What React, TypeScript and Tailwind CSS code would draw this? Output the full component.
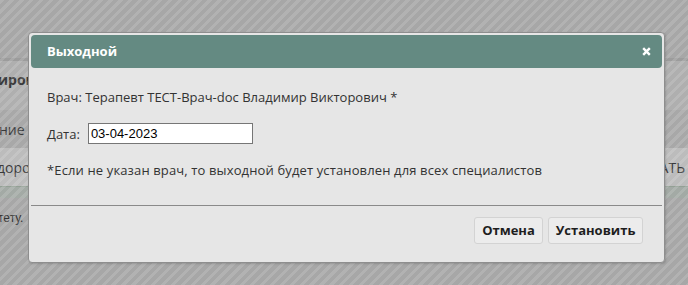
import React from "react";

export default function App() {
  return (
    <div className="relative w-[688px] h-[285px] overflow-hidden bg-[#a7a7a7] font-['Open_Sans',sans-serif]">
      {/* underlying page */}
      <div className="flex flex-col w-full">
        <div className="h-[58px]" />
        <div className="h-[52px] border-t-[3px] border-[#9c9c9c] bg-[#afafaf] flex items-center">
          <span className="ml-[-2px] text-[14px] font-bold text-[#3a3a3a] -mt-[12px]">ирование</span>
        </div>
        <div className="h-[38px] bg-[#a8a8a8] flex items-center">
          <span className="ml-[-1px] text-[14px] text-[#3a3a3a]">ние</span>
        </div>
        <div className="h-[38px] bg-[#bcbcbc] flex items-center justify-between">
          <span className="ml-[-3px] text-[14px] text-[#3a3a3a]">доровье</span>
          <span className="mr-[3px] text-[14px] text-[#3a3a3a]">АТЬ</span>
        </div>
        <div className="h-[12px] bg-[#a3aaa5] border-t border-[#93a095]" />
        <div className="h-[40px] flex items-center">
          <span className="ml-[-2px] text-[12px] text-[#333] font-['Liberation_Sans',sans-serif]">тету.</span>
        </div>
      </div>

      {/* striped overlay */}
      <div className="absolute inset-0 bg-[repeating-linear-gradient(135deg,rgba(255,255,255,0.13)_0px,rgba(255,255,255,0.13)_3px,rgba(0,0,0,0)_3px,rgba(0,0,0,0)_7px)]" />

      {/* dialog */}
      <div className="absolute left-[28px] top-[32px] w-[637px] h-[231px] bg-[#e6e6e6] border border-[#8e8e8e] rounded-[4px] p-[2px] flex flex-col shadow-[1px_1px_2px_rgba(0,0,0,0.15)]">
        <div className="h-[33px] shrink-0 bg-[#648a82] rounded-[4px] flex items-center justify-between pl-[16px] pr-[11px]">
          <span className="text-white font-bold text-[13px] leading-none">Выходной</span>
          <svg width="9" height="9" viewBox="0 0 9 9" className="mt-[-1px]">
            <path d="M1.2 1.2 L7.8 7.8 M7.8 1.2 L1.2 7.8" stroke="#ffffff" strokeWidth="2.4" strokeLinecap="butt" />
          </svg>
        </div>
        <div className="flex flex-col pl-[16px] pt-[20px] text-[13px] text-[#333] leading-[18px]">
          <div className="h-[18px]">Врач: Терапевт ТЕСТ-Врач-doc Владимир Викторович *</div>
          <div className="mt-[17px] h-[21px] flex items-center gap-[8px]">
            <span>Дата:</span>
            <input
              readOnly
              value="03-04-2023"
              className="w-[165px] h-[21px] border border-[#767676] bg-white pl-[2px] text-[13px] text-black font-['Liberation_Sans',sans-serif] outline-none"
            />
          </div>
          <div className="mt-[17px] h-[18px] tracking-[0.13px]">*Если не указан врач, то выходной будет установлен для всех специалистов</div>
        </div>
        <div className="mt-[26px] border-t border-[#8a8a8a]" />
        <div className="flex justify-end gap-[5px] pt-[11px] pr-[19px]">
          <button className="h-[27px] w-[69px] bg-[#ececec] border border-[#d3d3d3] rounded-[3px] text-[13px] font-bold text-[#1e1e1e]">Отмена</button>
          <button className="h-[27px] w-[95px] bg-[#ececec] border border-[#d3d3d3] rounded-[3px] text-[13px] font-bold text-[#1e1e1e]">Установить</button>
        </div>
      </div>
    </div>
  );
}
